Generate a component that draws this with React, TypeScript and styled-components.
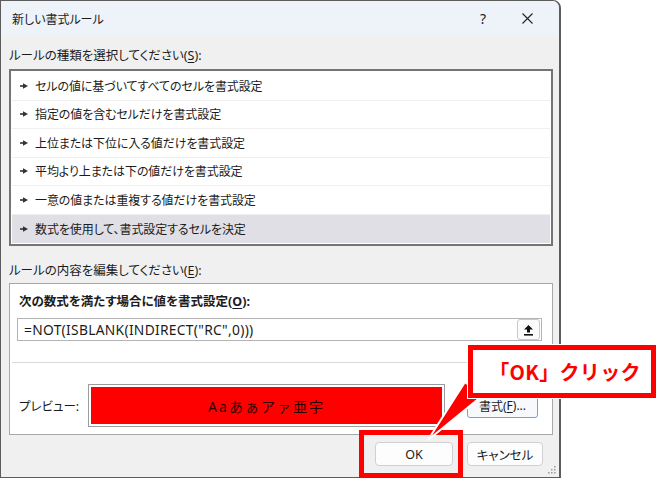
import React from "react";
import styled, { createGlobalStyle } from "styled-components";

const Global = createGlobalStyle`
  html, body { margin: 0; padding: 0; background: #ffffff; }
  * { box-sizing: border-box; }
`;

const UI = `"Noto Sans", "Noto Sans CJK JP", sans-serif`;

const Page = styled.div`
  position: relative;
  width: 662px;
  height: 482px;
  background: #ffffff;
  overflow: hidden;
  font-family: ${UI};
  color: #1b1b1b;
  font-feature-settings: "palt";
`;

const Dialog = styled.div`
  position: relative;
  width: 561px;
  height: 478px;
  background: #f0f0f0;
  border: 1px solid #5c5c5c;
  border-right-width: 2px;
  border-radius: 0 8px 0 0;
  display: flex;
  flex-direction: column;
`;

const TitleBar = styled.div`
  height: 35px;
  background: #eef2f9;
  border-radius: 0 7px 0 0;
  display: flex;
  align-items: center;
  padding-left: 11px;
  font-size: 12px;
`;

const Title = styled.div`
  flex: 1;
`;

const HelpMark = styled.div`
  width: 20px;
  text-align: center;
  font-size: 14px;
  margin-right: 22px;
  color: #222;
`;

const CloseBox = styled.div`
  width: 24px;
  margin-right: 20px;
  display: flex;
  justify-content: center;
`;

const Body = styled.div`
  padding: 0 6px 0 8px;
  display: flex;
  flex-direction: column;
`;

const SectionLabel = styled.div`
  margin-top: ${(p: { $mt: number }) => p.$mt}px;
  height: 18px;
  line-height: 18px;
  font-size: 12.5px;
`;

const U = styled.span`
  text-decoration: underline;
  text-underline-offset: 2px;
`;

const ListBox = styled.div`
  margin-top: 4px;
  border: 2px solid #747474;
  padding: 1px;
  background: #ffffff;
`;

const Row = styled.div<{ $selected?: boolean; $last?: boolean }>`
  height: 28.5px;
  display: flex;
  align-items: center;
  padding-left: 8px;
  font-size: 12px;
  letter-spacing: -0.1px;
  background: ${(p) => (p.$selected ? "#dfdfe5" : "#ffffff")};
  border-bottom: ${(p) => (p.$last ? "none" : "1px solid #efefef")};
`;

const Bullet = styled.svg`
  width: 8px;
  height: 6px;
  margin-right: 7px;
  flex: none;
`;

const Panel = styled.div`
  margin-top: 3px;
  height: 152px;
  border: 1px solid #a8a8a8;
  background: #ffffff;
  display: flex;
  flex-direction: column;
`;

const BoldLabel = styled.div`
  margin-top: 9px;
  padding-left: 9px;
  height: 18px;
  line-height: 18px;
  font-size: 12.5px;
  font-weight: 700;
`;

const FormulaField = styled.div`
  margin: 7px 10px 0 7px;
  height: 23px;
  border: 1px solid #b4b4b4;
  display: flex;
  align-items: center;
  padding-left: 6px;
`;

const FormulaText = styled.div`
  flex: 1;
  font-family: "Noto Sans", sans-serif;
  font-size: 13.8px;
  letter-spacing: 0.3px;
`;

const RefButton = styled.div`
  width: 23px;
  height: 21px;
  margin-right: 1px;
  border: 1px solid #c9c9c9;
  border-radius: 3px;
  background: #fbfbfb;
  display: flex;
  align-items: center;
  justify-content: center;
`;

const Divider = styled.div`
  margin: 21px 2px 0 2px;
  height: 1px;
  background: #d9d9d9;
`;

const PreviewRow = styled.div`
  margin-top: 21px;
  display: flex;
  align-items: center;
  padding-left: 9px;
`;

const PreviewLabel = styled.div`
  width: 69px;
  font-size: 12.5px;
`;

const PreviewBox = styled.div`
  width: 357px;
  height: 43px;
  border: 1px solid #9c9c9c;
  padding: 2px;
  background: #ffffff;
`;

const PreviewFill = styled.div`
  height: 100%;
  background: #ff0000;
  display: flex;
  align-items: center;
  justify-content: center;
  font-size: 14px;
  letter-spacing: 2px;
  color: #2a0000;
  font-feature-settings: normal;
`;

const FormatButton = styled.div`
  margin-left: 22px;
  width: 71px;
  height: 24px;
  border: 1px solid #6aa5e0;
  border-radius: 3px;
  background: #f7f9fc;
  display: flex;
  align-items: center;
  justify-content: center;
  font-size: 12px;
`;

const ButtonRow = styled.div`
  margin: 7px 10px 0 0;
  display: flex;
  justify-content: flex-end;
  gap: 14px;
`;

const PushButton = styled.div<{ $w: number }>`
  width: ${(p) => p.$w}px;
  height: 24px;
  border: 1px solid #d0d0d0;
  border-radius: 4px;
  background: #fdfdfd;
  display: flex;
  align-items: center;
  justify-content: center;
  font-size: 12.5px;
`;

const Grip = styled.svg`
  position: absolute;
  right: 3px;
  bottom: 3px;
  width: 9px;
  height: 9px;
`;

const Highlight = styled.div`
  position: absolute;
  left: 359px;
  top: 430px;
  width: 104px;
  height: 48px;
  border: 5px solid #ff0000;
`;

const Tail = styled.svg`
  position: absolute;
  left: 0;
  top: 0;
  width: 662px;
  height: 482px;
  pointer-events: none;
`;

const Callout = styled.div`
  position: absolute;
  left: 468px;
  top: 345px;
  width: 188px;
  height: 53px;
  border: 5px solid #ff0000;
  background: #ffffff;
  outline: 1.5px solid #ffffff;
  display: flex;
  align-items: center;
  justify-content: center;
  font-family: "Noto Sans CJK JP", sans-serif;
  font-feature-settings: normal;
  font-weight: 700;
  font-size: 20px;
  letter-spacing: 0.3px;
  color: #ff0000;
  padding-left: 6px;
`;

const rules = [
  "セルの値に基づいてすべてのセルを書式設定",
  "指定の値を含むセルだけを書式設定",
  "上位または下位に入る値だけを書式設定",
  "平均より上または下の値だけを書式設定",
  "一意の値または重複する値だけを書式設定",
  "数式を使用して、書式設定するセルを決定",
];

export default function App() {
  return (
    <Page>
      <Global />
      <Dialog>
        <TitleBar>
          <Title>新しい書式ルール</Title>
          <HelpMark>?</HelpMark>
          <CloseBox>
            <svg width="11" height="11" viewBox="0 0 11 11">
              <path d="M0.5 0.5 L10.5 10.5 M10.5 0.5 L0.5 10.5" stroke="#222" strokeWidth="1.1" fill="none" />
            </svg>
          </CloseBox>
        </TitleBar>
        <Body>
          <SectionLabel $mt={11}>
            ルールの種類を選択してください(<U>S</U>):
          </SectionLabel>
          <ListBox>
            {rules.map((r, i) => (
              <Row key={r} $selected={i === rules.length - 1} $last={i === rules.length - 1}>
                <Bullet viewBox="0 0 8 6">
                  <rect x="0" y="2.2" width="4" height="1.6" fill="#333" />
                  <path d="M3 0.3 L8 3 L3 5.7 Z" fill="#333" />
                </Bullet>
                {r}
              </Row>
            ))}
          </ListBox>
          <SectionLabel $mt={16}>
            ルールの内容を編集してください(<U>E</U>):
          </SectionLabel>
          <Panel>
            <BoldLabel>
              次の数式を満たす場合に値を書式設定(<U>O</U>):
            </BoldLabel>
            <FormulaField>
              <FormulaText>=NOT(ISBLANK(INDIRECT("RC",0)))</FormulaText>
              <RefButton>
                <svg width="11" height="12" viewBox="0 0 11 12">
                  <path d="M5.5 1 L10 5.5 L7 5.5 L7 8.5 L4 8.5 L4 5.5 L1 5.5 Z" fill="#111" />
                  <rect x="1" y="10" width="9" height="1.6" fill="#111" />
                </svg>
              </RefButton>
            </FormulaField>
            <Divider />
            <PreviewRow>
              <PreviewLabel>プレビュー:</PreviewLabel>
              <PreviewBox>
                <PreviewFill>Aaあぁアァ亜宇</PreviewFill>
              </PreviewBox>
              <FormatButton>
                書式(<U>F</U>)...
              </FormatButton>
            </PreviewRow>
          </Panel>
          <ButtonRow>
            <PushButton $w={78}>OK</PushButton>
            <PushButton $w={76}>キャンセル</PushButton>
          </ButtonRow>
        </Body>
        <Grip viewBox="0 0 9 9">
          {[
            [7, 1],
            [7, 4],
            [4, 4],
            [7, 7],
            [4, 7],
            [1, 7],
          ].map(([x, y]) => (
            <rect key={`${x}-${y}`} x={x} y={y} width="1.5" height="1.5" fill="#9a9a9a" />
          ))}
        </Grip>
      </Dialog>
      <Highlight />
      <Tail viewBox="0 0 662 482">
        <path d="M465 382 L482 396 L428 440 Z" fill="#ff0000" stroke="#ffffff" strokeWidth="2" strokeLinejoin="miter" />
      </Tail>
      <Callout>「OK」クリック</Callout>
    </Page>
  );
}
